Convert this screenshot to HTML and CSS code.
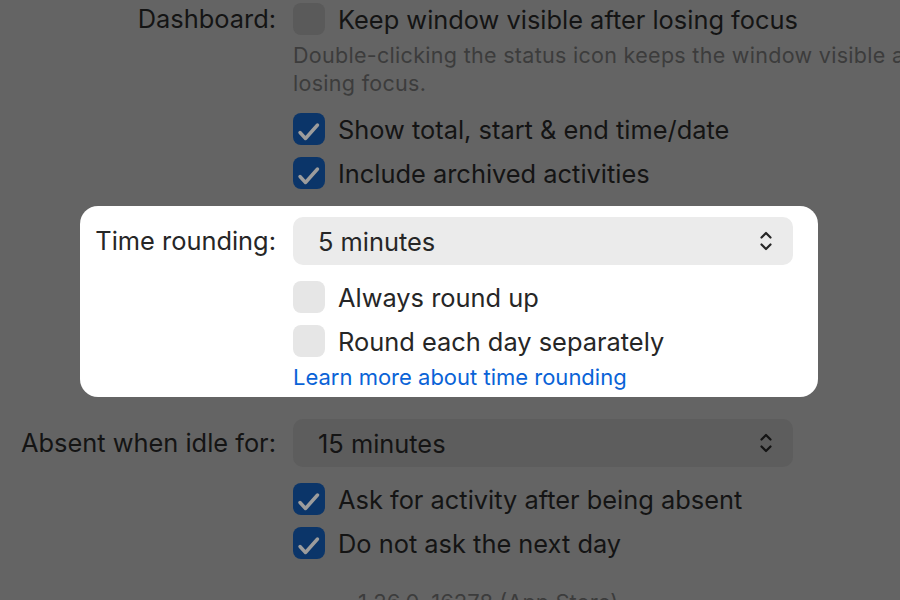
FILE: index.html
```html
<!DOCTYPE html>
<html lang="en">
<head>
<meta charset="utf-8">
<title>Settings</title>
<link rel="stylesheet" href="styles.css">
</head>
<body>
<main class="page">
  <section class="group dim">
    <div class="label">Dashboard:</div>
    <div class="controls">
      <div class="check-row">
        <span class="box"></span><span class="text">Keep window visible after losing focus</span>
      </div>
      <p class="desc">Double-clicking the status icon keeps the window visible after<br>losing focus.</p>
      <div class="check-row gap-top">
        <span class="box on"><svg viewBox="0 0 32 32"><path d="M7 19.5 L12.5 25.5 L24.5 12"/></svg></span><span class="text">Show total, start &amp; end time/date</span>
      </div>
      <div class="check-row">
        <span class="box on"><svg viewBox="0 0 32 32"><path d="M7 19.5 L12.5 25.5 L24.5 12"/></svg></span><span class="text">Include archived activities</span>
      </div>
    </div>
  </section>

  <section class="card">
    <div class="label label-pop">Time rounding:</div>
    <div class="controls">
      <div class="popup">
        <span class="pop-text">5 minutes</span>
        <svg class="chev" viewBox="0 0 12 20"><path d="M1.5 6.5 L6 2 L10.5 6.5 M1.5 13.5 L6 18 L10.5 13.5"/></svg>
      </div>
      <div class="check-row gap-top">
        <span class="box"></span><span class="text">Always round up</span>
      </div>
      <div class="check-row">
        <span class="box"></span><span class="text">Round each day separately</span>
      </div>
      <a class="link" href="#">Learn more about time rounding</a>
    </div>
  </section>

  <section class="group dim absent">
    <div class="label label-pop">Absent when idle for:</div>
    <div class="controls">
      <div class="popup">
        <span class="pop-text">15 minutes</span>
        <svg class="chev" viewBox="0 0 12 20"><path d="M1.5 6.5 L6 2 L10.5 6.5 M1.5 13.5 L6 18 L10.5 13.5"/></svg>
      </div>
      <div class="check-row gap-top">
        <span class="box on"><svg viewBox="0 0 32 32"><path d="M7 19.5 L12.5 25.5 L24.5 12"/></svg></span><span class="text">Ask for activity after being absent</span>
      </div>
      <div class="check-row">
        <span class="box on"><svg viewBox="0 0 32 32"><path d="M7 19.5 L12.5 25.5 L24.5 12"/></svg></span><span class="text">Do not ask the next day</span>
      </div>
      <p class="version">1.26.0, 16278 (App Store)</p>
    </div>
  </section>
</main>
</body>
</html>
```
FILE: styles.css
```css
* { box-sizing: border-box; }
html, body { margin: 0; padding: 0; }
body {
  background: #646464;
  font-family: Inter, "Noto Sans", "Liberation Sans", sans-serif;
  font-size: 25.4px;
  color: #141414;
  width: 900px;
  height: 600px;
  overflow: hidden;
}
.page {
  padding-top: 3px;
  display: flex;
  flex-direction: column;
}
.group, .card {
  display: grid;
  grid-template-columns: 276px 500px;
  column-gap: 17px;
  align-items: start;
}
.card {
  margin: 17px 0 0 80px;
  width: 738px;
  grid-template-columns: 196px 500px;
  background: #ffffff;
  border-radius: 18px;
  padding: 11px 0 8px 0;
  color: #262626;
}
.absent { margin-top: 22px; }
.label {
  text-align: right;
  line-height: 32px;
  white-space: nowrap;
}
.label-pop { line-height: 48px; }
.controls {
  display: flex;
  flex-direction: column;
  gap: 12px;
}
.check-row {
  display: flex;
  align-items: center;
  gap: 13px;
  height: 32px;
  white-space: nowrap;
}
.gap-top { margin-top: 4px; }
.box {
  flex: none;
  width: 32px;
  height: 32px;
  border-radius: 8px;
  background: #e6e6e6;
  display: flex;
}
.dim .box { background: #5a5a5a; }
.box.on, .dim .box.on { background: #0b3569; }
.box svg { width: 32px; height: 32px; }
.box svg path {
  fill: none;
  stroke: #9c9c9c;
  stroke-width: 3.4;
  stroke-linecap: round;
  stroke-linejoin: round;
}
.desc {
  margin: -6px 0 0 0;
  font-size: 21.5px;
  letter-spacing: 0.3px;
  line-height: 28px;
  color: #3c3c3c;
  white-space: nowrap;
}
.popup {
  height: 48px;
  border-radius: 10px;
  background: #ebebeb;
  display: flex;
  align-items: center;
  justify-content: space-between;
  padding: 0 21px 0 25px;
}
.dim .popup { background: #5d5d5d; }
.chev { width: 12px; height: 20px; }
.chev path {
  fill: none;
  stroke: #262626;
  stroke-width: 2.2;
  stroke-linecap: round;
  stroke-linejoin: round;
}
.dim .chev path { stroke: #141414; }
.link {
  margin-top: -4px;
  font-size: 22px;
  line-height: 24px;
  color: #0a63d7;
  text-decoration: none;
  white-space: nowrap;
}
.version {
  margin: 19px 0 0 65px;
  font-size: 22px;
  line-height: 24px;
  color: #3c3c3c;
  white-space: nowrap;
}
```
